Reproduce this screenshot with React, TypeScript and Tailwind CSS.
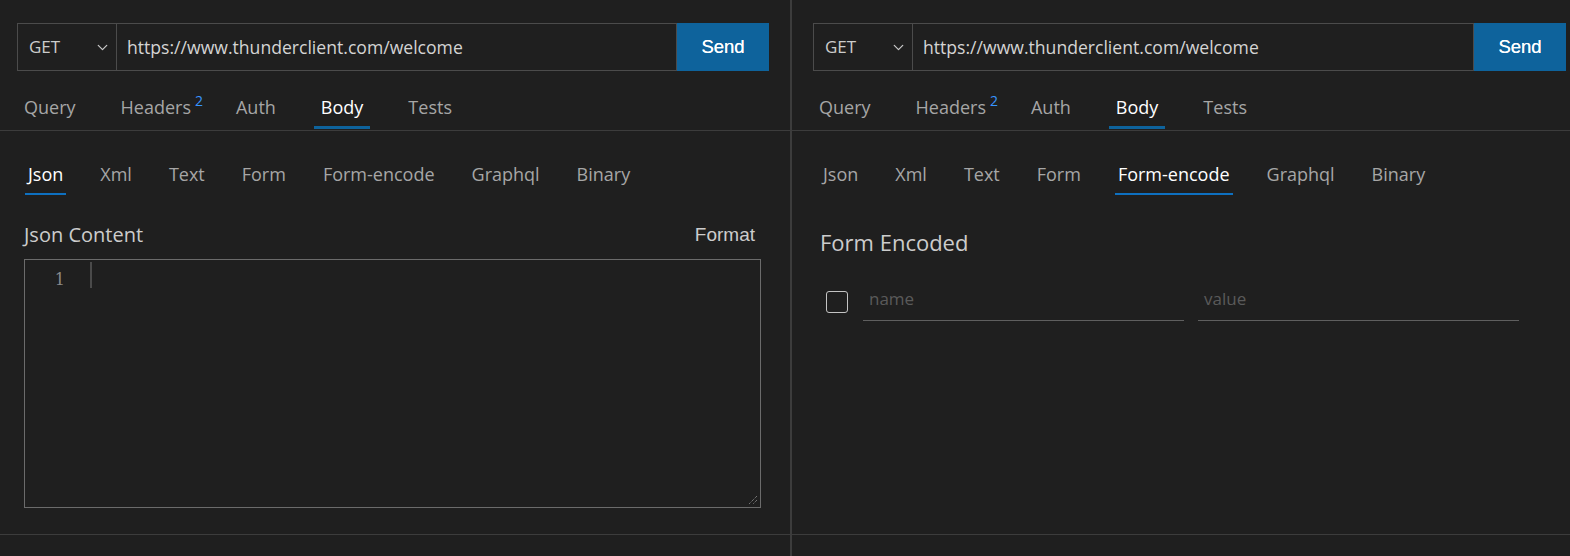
import { ChevronDown } from 'lucide-react';

const ui = "font-['Open_Sans','Noto_Sans',sans-serif]";
const arial = "font-['Liberation_Sans',Arial,sans-serif]";

function UrlBar() {
  return (
    <div className="flex h-[48px] w-full">
      <div className="flex w-[100px] items-center justify-between border border-[#4b4b4b] pl-[11px] pr-[5px]">
        <span className={`${ui} text-[17px] text-[#cccccc]`}>GET</span>
        <ChevronDown className="h-[17px] w-[17px] text-[#c8c8c8]" strokeWidth={1.75} />
      </div>
      <div className="flex flex-1 items-center border-y border-r border-[#4b4b4b] pl-[10px]">
        <span className={`${ui} text-[17.6px] text-[#d4d4d4]`}>https://www.thunderclient.com/welcome</span>
      </div>
      <button className={`${arial} w-[92px] bg-[#0e639c] text-[18.5px] text-white [text-shadow:0_0_0.6px_#fff]`}>Send</button>
    </div>
  );
}

function MainTabs({ pad }: { pad: string }) {
  const tabs = ['Query', 'Headers', 'Auth', 'Body', 'Tests'];
  return (
    <div className={`flex h-[60px] items-end gap-[31px] border-b border-[#3c3c3c] pb-[1px] ${pad}`}>
      {tabs.map((t) => {
        const active = t === 'Body';
        return (
          <div
            key={t}
            className={`relative border-b-[3px] px-[7px] pb-[7px] text-[18px] leading-[24px] ${ui} ${
              active ? 'border-[#0e639c] text-white' : 'border-transparent text-[#a6a6a6]'
            }`}
          >
            {t}
            {t === 'Headers' && (
              <span className="absolute right-[-5px] top-[-6px] text-[14px] text-[#3794ff]">2</span>
            )}
          </div>
        );
      })}
    </div>
  );
}

function BodyTabs({ active, pad }: { active: string; pad: string }) {
  const tabs = ['Json', 'Xml', 'Text', 'Form', 'Form-encode', 'Graphql', 'Binary'];
  return (
    <div className={`flex h-[64px] items-end gap-[31px] ${pad}`}>
      {tabs.map((t) => (
        <div
          key={t}
          className={`border-b-2 px-[3px] pb-[7px] text-[18px] leading-[24px] ${ui} ${
            t === active ? 'border-[#0e70c0] text-white' : 'border-transparent text-[#a6a6a6]'
          }`}
        >
          {t}
        </div>
      ))}
    </div>
  );
}

function LeftPanel() {
  return (
    <div className="flex w-[790px] flex-col">
      <div className="w-[769px] pl-[17px] pt-[23px]">
        <UrlBar />
      </div>
      <MainTabs pad="pl-[17px]" />
      <BodyTabs active="Json" pad="pl-[25px]" />
      <div className="flex items-center justify-between pl-[24px] pr-[35px] pt-[25px]">
        <span className={`${ui} text-[20px] text-[#cccccc]`}>Json Content</span>
        <span className={`${arial} text-[19px] text-[#cccccc]`}>Format</span>
      </div>
      <div className="relative ml-[24px] mt-[9px] flex h-[249px] w-[737px] border border-[#6b6b6b] pt-[2px]">
        <div className="w-[40px] pt-[8px] text-right font-['DejaVu_Serif',serif] text-[16px] leading-[20px] text-[#8a8a8a]">1</div>
        <div className="ml-[25px] h-[26px] w-[2px] bg-[#4a4a4a]" />
        <svg className="absolute bottom-[2px] right-[2px]" width="10" height="10" viewBox="0 0 10 10">
          <path d="M9 1 L1 9 M9 5 L5 9" stroke="#9a9a9a" strokeWidth="1" strokeDasharray="1 1" />
        </svg>
      </div>
      <div className="mt-[26px] h-px bg-[#3c3c3c]" />
    </div>
  );
}

function RightPanel() {
  return (
    <div className="flex flex-1 flex-col">
      <div className="w-[774px] pl-[21px] pt-[23px]">
        <UrlBar />
      </div>
      <MainTabs pad="pl-[20px]" />
      <BodyTabs active="Form-encode" pad="pl-[28px]" />
      <div className={`${ui} pl-[28px] pt-[31px] text-[22px] text-[#cccccc]`}>Form Encoded</div>
      <div className="flex items-end pl-[34px] pt-[27px]">
        <div className="mb-[8px] h-[22px] w-[22px] rounded-[3px] border-[1.5px] border-[#c4c4c4]" />
        <div className={`${ui} ml-[15px] w-[321px] border-b border-[#5f5f5f] pb-[8px] pl-[6px] text-[17px] text-[#5a5a5a]`}>name</div>
        <div className={`${ui} ml-[14px] w-[321px] border-b border-[#5f5f5f] pb-[8px] pl-[6px] text-[17px] text-[#5a5a5a]`}>value</div>
      </div>
      <div className="mt-[213px] h-px bg-[#3c3c3c]" />
    </div>
  );
}

export default function App() {
  return (
    <div className="flex h-[556px] w-[1570px] overflow-hidden bg-[#1f1f1f]">
      <LeftPanel />
      <div className="w-[2px] bg-[#3c3c3c]" />
      <RightPanel />
    </div>
  );
}
